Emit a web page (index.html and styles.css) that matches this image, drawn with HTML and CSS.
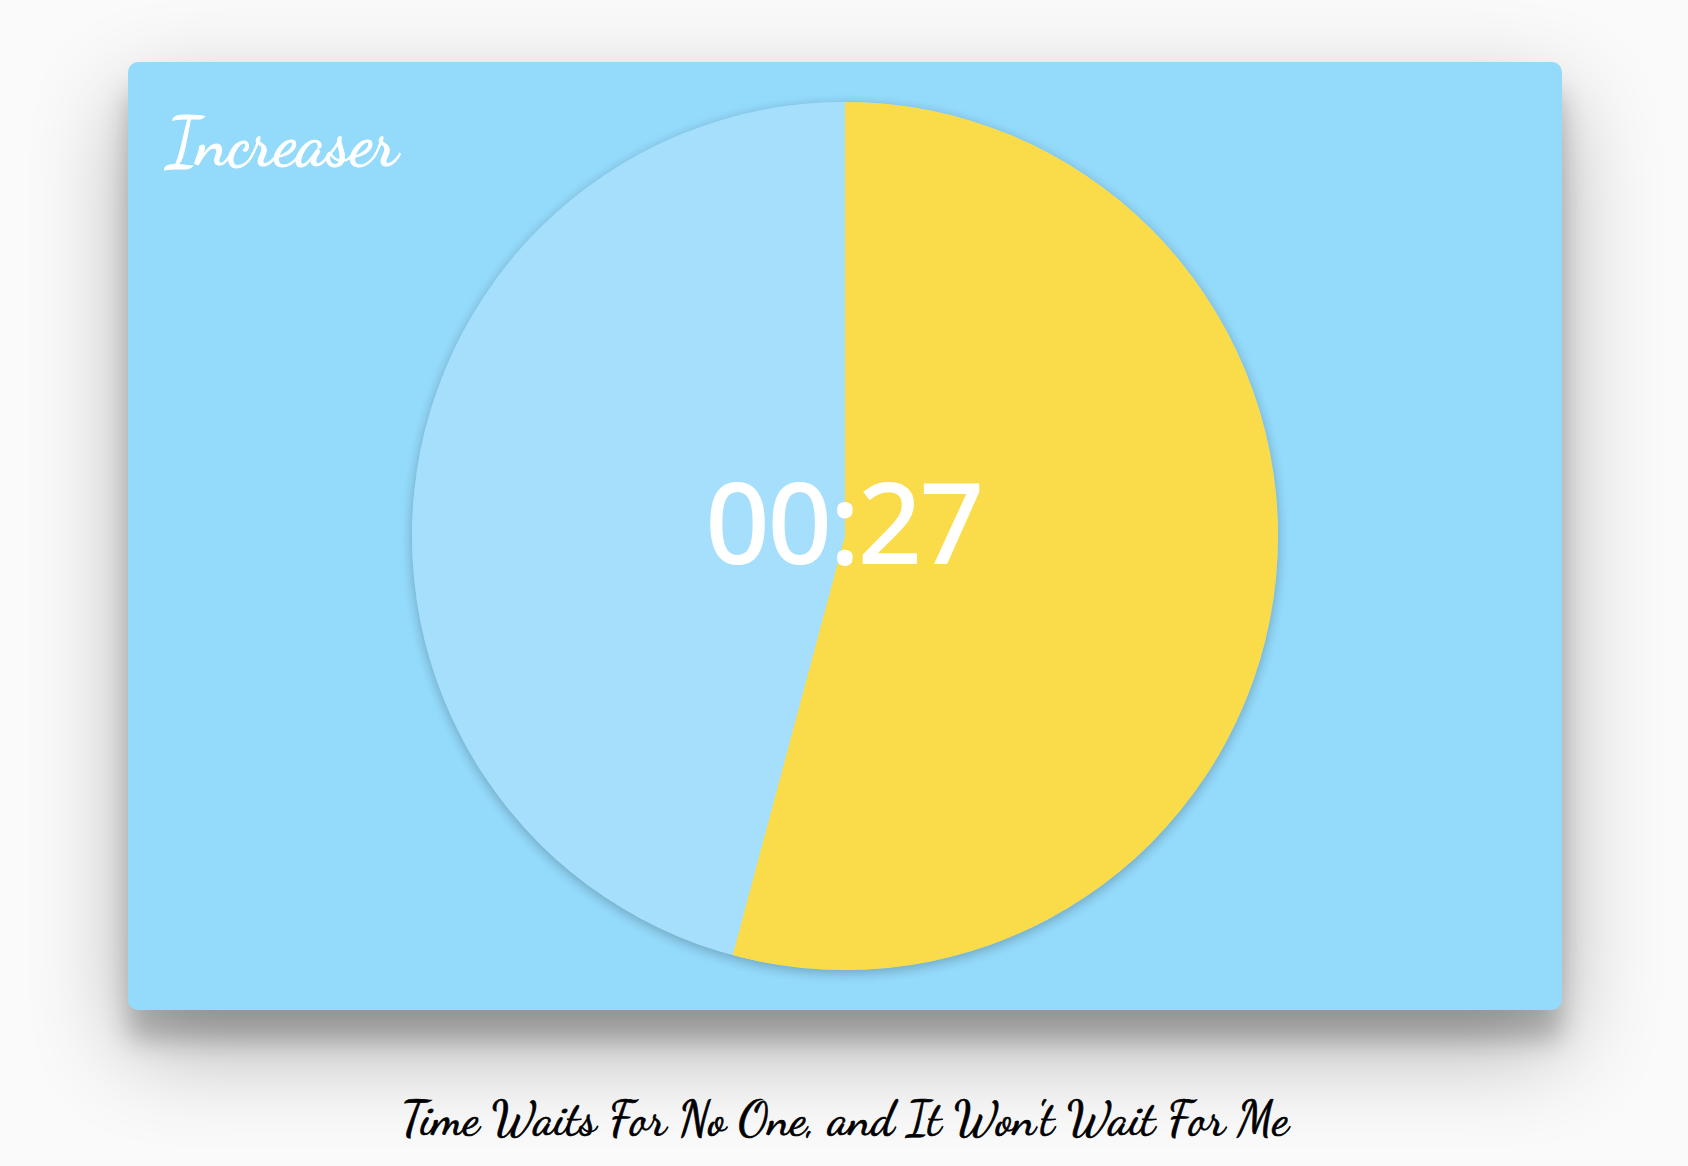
FILE: index.html
```html
<!DOCTYPE html>
<html lang="en">
<head>
<meta charset="utf-8">
<title>Increaser</title>
<link rel="stylesheet" href="styles.css">
</head>
<body>
<main class="page">
  <section class="card">
    <h1 class="brand">Increaser</h1>
    <div class="dial"><time class="clock">00:27</time></div>
  </section>
  <p class="tagline">Time Waits For No One, and It Won't Wait For Me</p>
</main>
</body>
</html>
```
FILE: styles.css
```css
* { box-sizing: border-box; }

body {
  margin: 0;
  background: #fafafa;
  overflow: hidden;
}

.page {
  display: flex;
  flex-direction: column;
  align-items: center;
  width: 1690px;
  height: 1166px;
  padding-top: 62px;
}

.card {
  position: relative;
  display: flex;
  justify-content: center;
  align-items: center;
  width: 1434px;
  height: 948px;
  border-radius: 10px;
  background: #94dafb;
  box-shadow: 0 38px 96px rgba(0, 0, 0, 0.3), 0 30px 26px rgba(0, 0, 0, 0.22);
}

.brand,
.tagline {
  margin: 0;
  font-family: "Dancing Script", cursive;
  font-weight: 400;
  line-height: 1.2;
  white-space: nowrap;
  -webkit-text-stroke: 0.015em currentColor;
}

.brand {
  position: absolute;
  top: 39px;
  left: 39px;
  font-size: 68.5px;
  color: #fff;
}

.dial {
  display: flex;
  justify-content: center;
  align-items: center;
  width: 866px;
  height: 868px;
  padding-bottom: 32px;
  border-radius: 50%;
  background: conic-gradient(#fadc4a 195deg, #a5dffc 195deg);
  box-shadow: 0 2px 12px rgba(0, 0, 0, 0.13), 0 4px 12px rgba(0, 0, 0, 0.13);
}

.clock {
  font-family: "Noto Sans", sans-serif;
  font-size: 113px;
  font-weight: 500;
  line-height: 1;
  letter-spacing: -2.6px;
  margin-left: -3px;
  color: #fff;
}

.tagline {
  margin-top: 80px;
  font-size: 48px;
  color: #000;
}
```
